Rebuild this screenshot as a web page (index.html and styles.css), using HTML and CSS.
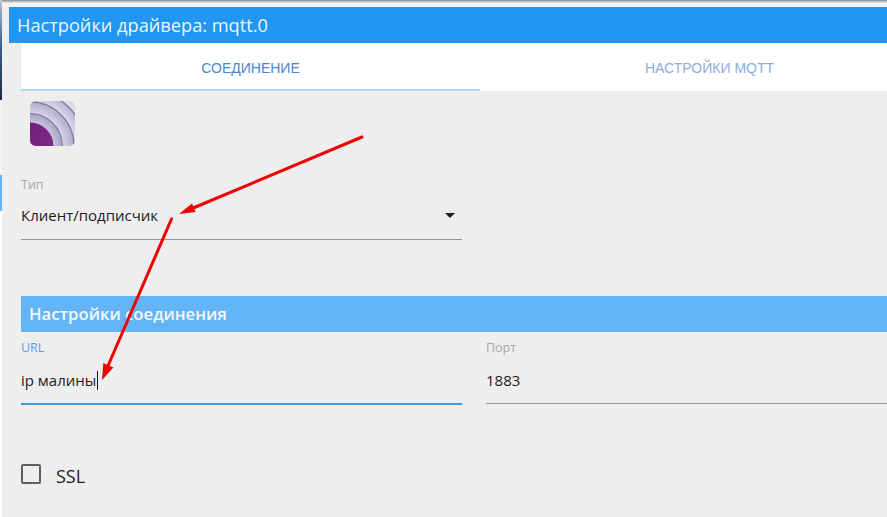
FILE: index.html
```html
<!DOCTYPE html>
<html lang="ru">
<head>
<meta charset="utf-8">
<title>Настройки драйвера: mqtt.0</title>
<link rel="stylesheet" href="styles.css">
</head>
<body>
<div class="screen">
  <aside class="edge"><div class="edge-dark"></div><div class="edge-mid"></div><div class="edge-blue"></div></aside>
  <div class="dialog">
    <div class="topline"></div>
    <header class="title">Настройки драйвера: mqtt.0</header>
    <main class="content">
      <nav class="tabs">
        <div class="tab active">СОЕДИНЕНИЕ</div>
        <div class="tab">НАСТРОЙКИ MQTT</div>
      </nav>
      <div class="logo">
        <svg width="45" height="45" viewBox="0 0 46 46">
          <defs>
            <radialGradient id="bg" gradientUnits="userSpaceOnUse" cx="0" cy="46" r="66">
              <stop offset="0.36" stop-color="#c8c4de"/>
              <stop offset="0.49" stop-color="#a9a5c9"/>
              <stop offset="0.5" stop-color="#d9d6e8"/>
              <stop offset="0.67" stop-color="#b2aed0"/>
              <stop offset="0.68" stop-color="#dedbea"/>
              <stop offset="0.84" stop-color="#b9b5d4"/>
              <stop offset="0.85" stop-color="#e3e1ee"/>
              <stop offset="1" stop-color="#cfcce2"/>
            </radialGradient>
            <linearGradient id="pu" x1="0" y1="0" x2="1" y2="1"><stop offset="0" stop-color="#6a1572"/><stop offset="0.7" stop-color="#7f2a85"/><stop offset="1" stop-color="#b666ab"/></linearGradient>
            <clipPath id="rr"><rect width="46" height="46" rx="6"/></clipPath>
          </defs>
          <g clip-path="url(#rr)">
            <rect width="46" height="46" fill="url(#bg)"/>
            <circle cx="0" cy="46" r="24" fill="url(#pu)"/>
            <g fill="none" stroke="#7b7899" stroke-width="1.3">
              <circle cx="0" cy="46" r="33"/>
              <circle cx="0" cy="46" r="45"/>
              <circle cx="0" cy="46" r="56"/>
            </g>
          </g>
        </svg>
      </div>
      <div class="field field-type">
        <label class="label">Тип</label>
        <div class="value select">Клиент/подписчик<span class="caret"></span></div>
      </div>
      <h2 class="section">Настройки соединения</h2>
      <div class="row">
        <div class="field field-url">
          <label class="label label-focus">URL</label>
          <div class="value focused">ip малины<span class="cursor"></span></div>
        </div>
        <div class="field field-port">
          <label class="label">Порт</label>
          <div class="value">1883</div>
        </div>
      </div>
      <div class="check"><span class="box"></span><span class="check-text">SSL</span></div>
    </main>
  </div>
  <svg class="arrows" width="887" height="517" viewBox="0 0 887 517">
    <line class="shaft" x1="362" y1="137" x2="192" y2="208.5"/>
    <polygon class="head" points="179,214 192,203.6 195.5,212"/>
    <line class="shaft" x1="171.5" y1="219" x2="107.5" y2="367"/>
    <polygon class="head" points="102,380 103.3,363.1 113.4,367.5"/>
  </svg>
</div>
</body>
</html>
```
FILE: styles.css
```css
* { box-sizing: border-box; }
html, body { margin: 0; padding: 0; background: #fff; }
body { width: 887px; height: 517px; overflow: hidden; font-family: "Open Sans", "Noto Sans", sans-serif; }
.screen { position: relative; display: flex; width: 887px; height: 517px; overflow: hidden; }
.edge { width: 2px; flex: none; display: flex; flex-direction: column; }
.edge-dark { height: 100px; background: linear-gradient(#c5ccd3, #8ea6bf 12%, #3d628c 45%, #1d2a44); }
.edge-mid { height: 75px; background: #f4f4f4; }
.edge-blue { height: 36px; background: #64b5f6; }
.dialog { flex: 1; display: flex; flex-direction: column; min-width: 0; background: #eee; }
.topline { height: 7px; background: linear-gradient(#8d8d8d, #c9c9c9 30%, #f2f2f2 40%, #f2f5f7); }
.title { height: 36px; margin-left: 7px; padding-left: 8px; background: #2196f3; color: #eaf5fe; font-size: 18.2px; line-height: 36px; white-space: nowrap; }
.content { flex: 1; background: #eee; padding-left: 19px; display: flex; flex-direction: column; }
.tabs { display: flex; height: 48px; background: #fff; }
.tab { width: 459px; flex: none; padding-top: 4px; text-align: center; color: #8aaee0; font-family: "Liberation Sans", sans-serif; font-size: 14px; line-height: 42px; border-bottom: 2px solid transparent; }
.tab.active { color: #4687cf; border-bottom-color: #b3d4f2; }
.logo { height: 45px; margin: 10px 0 0 9px; }
.logo svg { display: block; }
.field { display: flex; flex-direction: column; }
.field-type { width: 441px; margin-top: 31px; }
.label { font-size: 12.5px; line-height: 16px; height: 16px; color: #a8a8a8; }
.label-focus { color: #5a9be6; }
.value { position: relative; height: 48px; padding-top: 12px; font-size: 15px; line-height: 25px; color: #1c1c1c; border-bottom: 1px solid #949494; }
.select { padding-top: 10px; height: 47px; }
.focused { height: 49px; border-bottom: 2px solid #3f9ade; }
.caret { position: absolute; right: 7px; top: 20px; border: 5px solid transparent; border-top-color: #1a1a1a; border-bottom: 0; }
.cursor { display: inline-block; width: 1px; height: 19px; margin-left: 1px; background: #111; vertical-align: -4px; }
.section { margin: 56px 0 0; height: 36px; padding-left: 8px; background: #64b5f6; color: #f2f8fe; font-size: 16.7px; font-weight: 600; line-height: 36px; white-space: nowrap; }
.row { display: flex; gap: 24px; margin-top: 8px; align-items: flex-start; }
.field-url { width: 441px; flex: none; }
.field-port { flex: 1; }
.check { display: flex; align-items: center; margin-top: 58px; height: 22px; }
.box { width: 20px; height: 20px; border: 2px solid #5f5f5f; border-radius: 2px; }
.check-text { margin-left: 15px; padding-top: 3px; font-size: 18px; color: #1c1c1c; }
.arrows { position: absolute; left: 0; top: 0; pointer-events: none; }
.shaft { stroke: #f00000; stroke-width: 3; stroke-linecap: round; }
.head { fill: #f00000; }
```
